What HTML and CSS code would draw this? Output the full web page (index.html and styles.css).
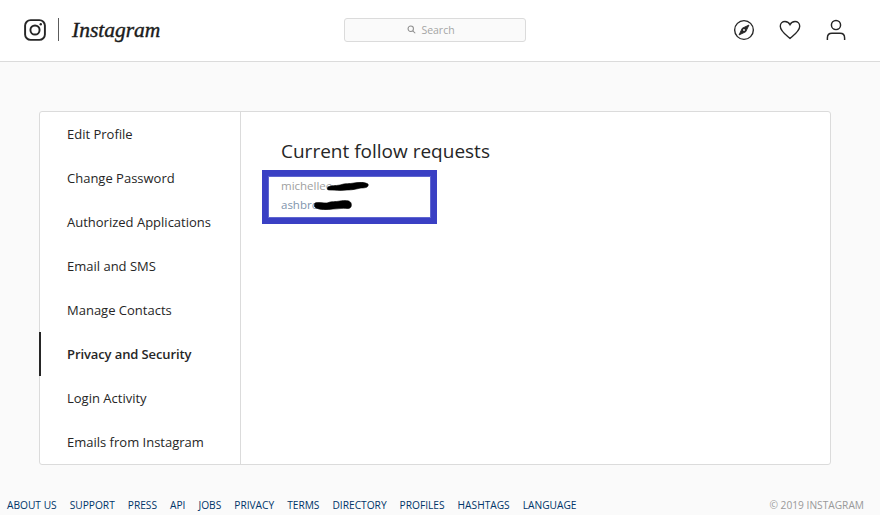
FILE: index.html
```html
<!DOCTYPE html>
<html lang="en">
<head>
<meta charset="utf-8">
<title>Instagram</title>
<link rel="stylesheet" href="styles.css">
</head>
<body>
<header class="topbar">
  <div class="brand">
    <svg class="glyph" viewBox="0 0 24 24" width="22" height="22" fill="none" stroke="#262626" stroke-width="2.1"><rect x="1.2" y="1.2" width="21.6" height="21.6" rx="6"/><circle cx="12" cy="12" r="5"/><circle cx="18.3" cy="5.7" r="1.3" fill="#262626" stroke="none"/></svg>
    <span class="divider"></span>
    <span class="wordmark">Instagram</span>
  </div>
  <div class="search">
    <svg viewBox="0 0 12 12" width="9" height="9" fill="none" stroke="#8e8e8e" stroke-width="1.4"><circle cx="5" cy="5" r="3.6"/><path d="M7.7 7.7 11 11"/></svg>
    <span>Search</span>
  </div>
  <nav class="icons">
    <svg viewBox="0 0 24 24" width="22" height="22" fill="none" stroke="#262626" stroke-width="1.5"><circle cx="12" cy="12" r="10.2"/><path d="M17.4 6.6 13.9 13.9 6.6 17.4 10.1 10.1Z" fill="#262626" stroke-width="1"/><circle cx="12" cy="12" r="1" fill="#fff" stroke="none"/></svg>
    <svg viewBox="0 0 24 24" width="22" height="22" fill="none" stroke="#262626" stroke-width="1.5"><path d="M12 21.2C8.5 18 1.4 13.2 1.4 7.8 1.4 4.7 3.8 2.7 6.5 2.7 8.8 2.7 10.9 3.9 12 6.2 13.1 3.9 15.2 2.7 17.5 2.7 20.2 2.7 22.6 4.7 22.6 7.8 22.6 13.2 15.5 18 12 21.2Z"/></svg>
    <svg viewBox="0 0 24 24" width="22" height="22" fill="none" stroke="#262626" stroke-width="1.6"><circle cx="12" cy="6.6" r="5"/><path d="M2.6 23V20.6C2.6 17.4 4.8 15.6 7.6 15.6H16.4C19.2 15.6 21.4 17.4 21.4 20.6V23"/></svg>
  </nav>
</header>

<main class="card">
  <ul class="side">
    <li>Edit Profile</li>
    <li>Change Password</li>
    <li>Authorized Applications</li>
    <li>Email and SMS</li>
    <li>Manage Contacts</li>
    <li class="active">Privacy and Security</li>
    <li>Login Activity</li>
    <li>Emails from Instagram</li>
  </ul>
  <section class="content">
    <h1>Current follow requests</h1>
    <div class="highlight">
      <div class="req req-one">michellee<svg class="blot blot-one" viewBox="0 0 42 9" width="42" height="9"><path d="M1 5C5 3 8 4 13 3 18 1 23 2 27 1 32 0 38 0 41 2 42 5 39 6 34 6 29 7 26 8 20 8 13 9 7 8 2 8 0 8 0 6 1 5Z" fill="#000" stroke="#000" stroke-width="0.6"/></svg></div>
      <div class="req req-two">ashbro<svg class="blot blot-two" viewBox="0 0 38 10" width="38" height="10"><path d="M1 3C4 2 8 3 13 3 17 1 22 2 26 1 30 0 36 0 37 3 38 6 37 9 33 8.500 28 8 24 9 19 9 13 10 6 10 2 8 0 7 0 5 1 3Z" fill="#000" stroke="#000" stroke-width="0.6"/></svg></div>
    </div>
  </section>
</main>

<footer class="foot">
  <div class="links">
    <span>About us</span><span>Support</span><span>Press</span><span>API</span><span>Jobs</span><span>Privacy</span><span>Terms</span><span>Directory</span><span>Profiles</span><span>Hashtags</span><span>Language</span>
  </div>
  <div class="copy">© 2019 Instagram</div>
</footer>
</body>
</html>
```

FILE: styles.css
```css
* { box-sizing: border-box; }
html, body { margin: 0; height: 515px; overflow: hidden; }
body {
  background: #fafafa;
  font-family: "Open Sans", "Noto Sans", "Liberation Sans", sans-serif;
  color: #262626;
  display: flex;
  flex-direction: column;
}
.topbar {
  height: 62px;
  background: #fff;
  border-bottom: 1px solid #dbdbdb;
  display: grid;
  grid-template-columns: 1fr 182px 1fr;
  align-items: center;
  padding: 0 34px 2px 24px;
  flex: none;
}
.brand { display: flex; align-items: center; }
.divider { width: 1px; height: 23px; background: #5c5c5c; margin: 0 13px 0 12px; }
.wordmark {
  font-family: "Liberation Serif", serif;
  font-style: italic;
  font-size: 21.5px;
  line-height: 30px;
  color: #1b1b1b;
  -webkit-text-stroke: 0.4px #1b1b1b;
}
.search {
  height: 24px;
  background: #fafafa;
  border: 1px solid #dbdbdb;
  border-radius: 3px;
  display: flex;
  align-items: center;
  justify-content: center;
  gap: 5px;
  padding-right: 8px;
  font-size: 10.5px;
  color: #a5a5a5;
}
.icons { display: flex; justify-content: flex-end; gap: 24px; margin-right: -1px; }
.card {
  margin: 49px 49px 0 39px;
  height: 354px;
  flex: none;
  background: #fff;
  border: 1px solid #dbdbdb;
  border-radius: 3px;
  display: flex;
}
.side {
  list-style: none;
  margin: 0;
  padding: 0;
  width: 201px;
  border-right: 1px solid #dbdbdb;
  flex: none;
}
.side li {
  height: 44px;
  line-height: 44px;
  padding-left: 26px;
  font-size: 13px;
  color: #262626;
  border-left: 2px solid transparent;
  margin-left: -1px;
}
.side li.active {
  border-left-color: #262626;
  font-weight: 600;
  letter-spacing: -0.1px;
}
.content { flex: 1; padding: 24px 0 0 21px; }
h1 {
  font-size: 19px;
  font-weight: 400;
  line-height: 30px;
  margin: 0 0 4px 19px;
  color: #262626;
}
.highlight {
  width: 175px;
  height: 54px;
  border: 6px solid #3a40c4;
  outline: 1px solid #5f66d0;
  outline-offset: -7px;
  padding: 0 0 0 13px;
  background: #fff;
}
.req {
  position: relative;
  height: 19px;
  line-height: 19px;
  font-size: 11.5px;
}
.req-one { color: #a0a0a0; }
.req-two { color: #7f95ad; }
.blot { position: absolute; }
.blot-one { left: 46px; top: 6px; }
.blot-two { left: 33px; top: 5px; }
.foot {
  display: flex;
  justify-content: space-between;
  align-items: center;
  margin-top: 31px;
  padding: 0 16px 0 7px;
  height: 18px;
  font-size: 10.2px;
  text-transform: uppercase;
}
.links { display: flex; gap: 13px; color: #003569; }
.copy { color: #999; }
```
